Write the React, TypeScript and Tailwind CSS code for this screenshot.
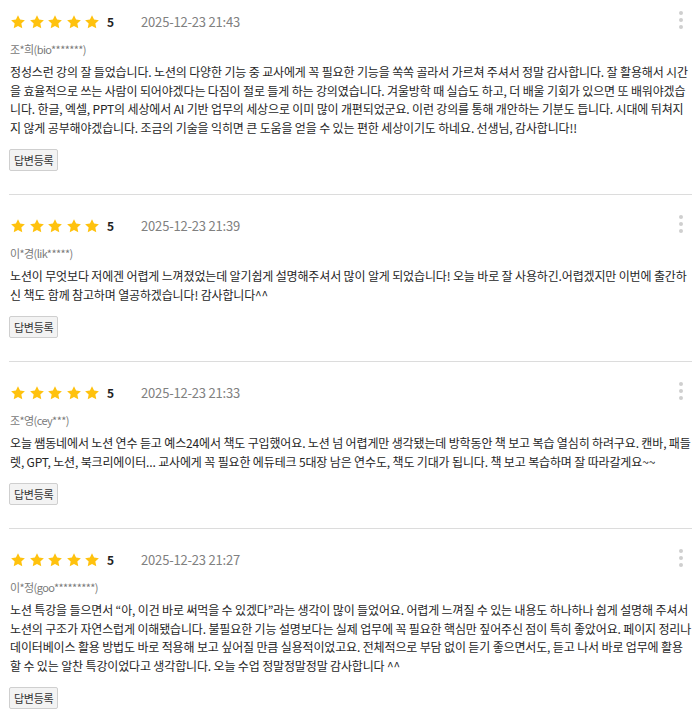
import React from "react";

type Review = {
  user: string;
  date: string;
  rating: number;
  body: string;
};

const reviews: Review[] = [
  {
    user: "조*희(bio*******)",
    date: "2025-12-23 21:43",
    rating: 5,
    body: "정성스런 강의 잘 들었습니다. 노션의 다양한 기능 중 교사에게 꼭 필요한 기능을 쏙쏙 골라서 가르쳐 주셔서 정말 감사합니다. 잘 활용해서 시간을 효율적으로 쓰는 사람이 되어야겠다는 다짐이 절로 들게 하는 강의였습니다. 겨울방학 때 실습도 하고, 더 배울 기회가 있으면 또 배워야겠습니다. 한글, 엑셀, PPT의 세상에서 AI 기반 업무의 세상으로 이미 많이 개편되었군요. 이런 강의를 통해 개안하는 기분도 듭니다. 시대에 뒤쳐지지 않게 공부해야겠습니다. 조금의 기술을 익히면 큰 도움을 얻을 수 있는 편한 세상이기도 하네요. 선생님, 감사합니다!!",
  },
  {
    user: "이*경(lik*****)",
    date: "2025-12-23 21:39",
    rating: 5,
    body: "노션이 무엇보다 저에겐 어렵게 느껴졌었는데 알기쉽게 설명해주셔서 많이 알게 되었습니다! 오늘 바로 잘 사용하긴.어렵겠지만 이번에 출간하신 책도 함께 참고하며 열공하겠습니다! 감사합니다^^",
  },
  {
    user: "조*영(cey***)",
    date: "2025-12-23 21:33",
    rating: 5,
    body: "오늘 쌤동네에서 노션 연수 듣고 예스24에서 책도 구입했어요. 노션 넘 어렵게만 생각됐는데 방학동안 책 보고 복습 열심히 하려구요. 캔바, 패들렛, GPT, 노션, 북크리에이터... 교사에게 꼭 필요한 에듀테크 5대장 남은 연수도, 책도 기대가 됩니다. 책 보고 복습하며 잘 따라갈게요~~",
  },
  {
    user: "이*정(goo*********)",
    date: "2025-12-23 21:27",
    rating: 5,
    body: "노션 특강을 들으면서 “아, 이건 바로 써먹을 수 있겠다”라는 생각이 많이 들었어요. 어렵게 느껴질 수 있는 내용도 하나하나 쉽게 설명해 주셔서 노션의 구조가 자연스럽게 이해됐습니다. 불필요한 기능 설명보다는 실제 업무에 꼭 필요한 핵심만 짚어주신 점이 특히 좋았어요. 페이지 정리나 데이터베이스 활용 방법도 바로 적용해 보고 싶어질 만큼 실용적이었고요. 전체적으로 부담 없이 듣기 좋으면서도, 듣고 나서 바로 업무에 활용할 수 있는 알찬 특강이었다고 생각합니다. 오늘 수업 정말정말정말 감사합니다 ^^",
  },
];

function Star() {
  return (
    <svg width="16" height="16" viewBox="0 0 24 24" className="block">
      <path
        d="M12 1.8l3.1 6.6 7.2.9-5.3 5 1.4 7.1L12 17.9l-6.4 3.5L7 14.3l-5.3-5 7.2-.9z"
        fill="#ffc20e"
      />
    </svg>
  );
}

function ReviewItem({ review, first }: { review: Review; first: boolean }) {
  return (
    <div
      className={
        first
          ? "pt-[12px] pb-[23px] border-b border-[#dcdcdc]"
          : "pt-[21px] pb-[23px] border-b border-[#dcdcdc]"
      }
    >
      <div className="flex items-center h-[20px]">
        <div className="flex items-center gap-[2.5px] pl-[1px]">
          {Array.from({ length: review.rating }).map((_, i) => (
            <Star key={i} />
          ))}
        </div>
        <span className="ml-[7px] text-[12px] font-bold text-[#222]">
          {review.rating}
        </span>
        <span className="ml-[27px] text-[13px] text-[#808080] tracking-[-0.2px]">
          {review.date}
        </span>
        <div className="ml-auto mr-[9px] flex flex-col gap-[3px] -mt-[5px]">
          <span className="block w-[4px] h-[4px] rounded-full bg-[#cfcfcf]" />
          <span className="block w-[4px] h-[4px] rounded-full bg-[#cfcfcf]" />
          <span className="block w-[4px] h-[4px] rounded-full bg-[#cfcfcf]" />
        </div>
      </div>
      <div className="mt-[9px] text-[11px] leading-[16px] text-[#7a7a7a] tracking-[-0.6px] pl-[1px]">
        {review.user}
      </div>
      <p className="mt-[6px] text-[12px] leading-[18.5px] text-[#262626] tracking-[-0.15px] pl-[1px]">
        {review.body}
      </p>
      <button
        type="button"
        className="mt-[12px] h-[22px] px-[4px] border border-[#cfcfcf] rounded-[2px] bg-[#f3f3f3] text-[11px] text-[#333] tracking-[-0.3px]"
      >
        답변등록
      </button>
    </div>
  );
}

export default function App() {
  return (
    <div
      className="w-[700px] bg-white pl-[9px] pr-[8px]"
      style={{ fontFamily: '"Noto Sans CJK KR", "Noto Sans", sans-serif' }}
    >
      {reviews.map((r, i) => (
        <ReviewItem key={i} review={r} first={i === 0} />
      ))}
    </div>
  );
}
